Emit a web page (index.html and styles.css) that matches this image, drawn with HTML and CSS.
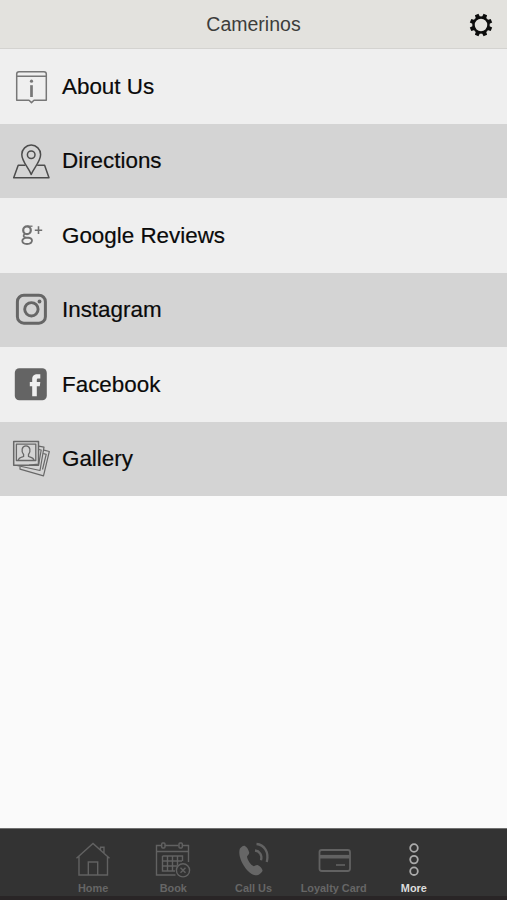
FILE: index.html
```html
<!DOCTYPE html>
<html lang="en">
<head>
    <meta charset="UTF-8">
    <meta name="viewport" content="width=device-width, initial-scale=1.0">
    <title>Camerinos</title>
    <link rel="stylesheet" href="styles.css">
</head>
<body>
    <header class="header">
        <span class="header-side"></span>
        <h1>Camerinos</h1>
        <span class="header-side">
            <svg class="settings-icon" viewBox="-12 -12 24 24">
                <circle r="7.5" fill="none" stroke="#0c0c0c" stroke-width="2.5"/>
                <g fill="#0c0c0c">
                    <path id="tooth" d="M-2.2-7.8-1.9-11.3H1.9L2.2-7.8z" transform="rotate(22.5)"/>
                    <use href="#tooth" transform="rotate(45)"/>
                    <use href="#tooth" transform="rotate(90)"/>
                    <use href="#tooth" transform="rotate(135)"/>
                    <use href="#tooth" transform="rotate(180)"/>
                    <use href="#tooth" transform="rotate(225)"/>
                    <use href="#tooth" transform="rotate(270)"/>
                    <use href="#tooth" transform="rotate(315)"/>
                </g>
            </svg>
        </span>
    </header>

    <main class="menu">
        <a class="menu-item">
            <svg class="menu-icon" viewBox="0 -3 60 60" stroke="#777">
                <path d="M19 11.7H44Q46.3 11.7 46.3 14V40.3H34L31.5 42.6 29 40.3H16.7V14Q16.7 11.7 19 11.7zM17 16.2H46"/>
                <path d="M31.5 25.2V37" stroke-width="2.7"/>
                <circle cx="31.5" cy="21.2" r="1.6" fill="#777" stroke="none"/>
            </svg>
            <span>About Us</span>
        </a>
        <a class="menu-item">
            <svg class="menu-icon" viewBox="0 -2.5 60 60" stroke="#4c4c4c">
                <path d="M31.2 41C28.5 34 21.8 28 21.8 21A9.4 9.4 0 0 1 40.6 21C40.6 28 34 34 31.2 41z"/>
                <circle cx="31.2" cy="21.2" r="3.8"/>
                <path d="M25.3 31.7H18.2L13.7 44.3H49L44.6 31.7H37.2"/>
            </svg>
            <span>Directions</span>
        </a>
        <a class="menu-item">
            <svg class="menu-icon" viewBox="0 -2 60 60" stroke="#707070">
                <ellipse cx="27" cy="22.2" rx="3.8" ry="3.9" stroke-width="2.2"/>
                <path d="M27 18.2H32.5" stroke-width="1.3"/>
                <path d="M25 26C22.5 27.5 23.5 29.2 26 29.5C30 29.7 32 30.5 32 32.3C32 34.8 29.8 36 27 36C24 36 22.3 34.7 22.3 32.8C22.3 31.3 24 30.2 26 29.6" stroke-width="1.8"/>
                <path d="M34.8 22.2H42.2M38.5 18.3V26.1" stroke-width="1.6"/>
            </svg>
            <span>Google Reviews</span>
        </a>
        <a class="menu-item">
            <svg class="menu-icon" viewBox="0 -3.5 60 60" stroke="#666">
                <rect x="17.4" y="11.7" width="28" height="28" rx="6.5" stroke-width="3"/>
                <circle cx="31.4" cy="25.8" r="6.7" stroke-width="2.9"/>
                <circle cx="39.5" cy="18" r="1.9" fill="#666" stroke="none"/>
            </svg>
            <span>Instagram</span>
        </a>
        <a class="menu-item">
            <svg class="menu-icon" viewBox="0 -3 60 60">
                <rect x="14.8" y="10.2" width="32" height="32" rx="4.5" fill="#646464"/>
                <path d="M32.2 38.3V28.3H29.8V24H32.2V21.5C32.2 17.7 34 16.2 37.4 16.2H40.3V20.5H38.2C37 20.5 36.8 21.1 36.8 22V24H40.3L39.8 28.3H36.8V38.3z" fill="#efefef"/>
            </svg>
            <span>Facebook</span>
        </a>
        <a class="menu-item">
            <svg class="menu-icon" viewBox="0 -0.5 60 60" stroke="#686868">
                <rect x="13.7" y="12" width="24.8" height="23.7"/>
                <rect x="16.4" y="14.6" width="19.4" height="16.4" stroke-width="1.3"/>
                <path d="M18.3 30.8C18.6 28 21 27.8 23.6 27V25C21 22 21.6 16.4 26 16.4S31 22 28.5 25V27C31 27.8 33.6 28 34 30.8" stroke-width="1.3"/>
                <g stroke-width="1.2">
                    <path d="M38.6 16.7L44 17.7 40 41 17 36M38.6 20L41.2 20.5 38.7 34.6 29 35.7"/>
                    <path d="M44 20.7L49.3 22 43.5 46.3 20 39.7V37M43.2 24L46.2 24.8 42.5 40"/>
                </g>
            </svg>
            <span>Gallery</span>
        </a>
    </main>

    <nav class="tab-bar">
        <a class="tab">
            <svg class="tab-icon" viewBox="0 0 44 44">
                <path d="M5.5 20.2L22 5.5 38.5 20.2M8 18V37H36.5V18M17.3 37V24H26.7V37M29.5 12V9.2H33V15.2"/>
            </svg>
            <span>Home</span>
        </a>
        <a class="tab">
            <svg class="tab-icon" viewBox="0 0 44 44">
                <path d="M10 7.5H5.5V37H24.5M14 7.5H27.5M31.5 7.5H37.5V24M5.5 13.5H37.5"/>
                <rect x="10.7" y="5" width="3.3" height="5" rx="1"/>
                <rect x="28" y="5" width="3.3" height="5" rx="1"/>
                <path d="M11.5 18H31.5V23M11.5 18V33H24M11.5 23H31M11.5 28H27M16.5 18V33M21.5 18V33M26.5 18V27"/>
                <circle cx="32" cy="32.3" r="6.6"/>
                <path d="M29.5 29.8L34.5 34.8M34.5 29.8L29.5 34.8"/>
            </svg>
            <span>Book</span>
        </a>
        <a class="tab">
            <svg class="tab-icon" viewBox="0 0 44 44">
                <path d="M7.8 10.8C9 9 11 7.3 12.6 7.7C15.2 9 16.4 11.5 17.2 14.5C17.3 16.3 15.5 17.2 15 18.5C15.5 22.3 18.5 26.8 21.8 28.3C23 27.9 24 26.7 26 27.2C28.4 28.4 30.1 30.5 30.6 32.5C29.8 35 26.5 37.6 23.5 37.3C15.5 36.7 4.8 20 7.8 10.8z" fill="#666" stroke="none"/>
                <path d="M24.5 6C32 6.5 37.3 14 34.8 24M23 12.5C27.5 13 30.5 17 29 22.2" stroke-width="2.3"/>
            </svg>
            <span>Call Us</span>
        </a>
        <a class="tab">
            <svg class="tab-icon" viewBox="0 0 44 44">
                <rect x="7.5" y="12" width="30.5" height="21" rx="2.2" stroke-width="1.8"/>
                <path d="M8 18.7H37.7" stroke-width="3.6"/>
                <path d="M24 27H33" stroke-width="1.6"/>
            </svg>
            <span>Loyalty Card</span>
        </a>
        <a class="tab active">
            <svg class="tab-icon" viewBox="0 0 44 44">
                <circle cx="22" cy="10" r="3.8" stroke-width="1.8"/>
                <circle cx="22" cy="21.6" r="3.8" stroke-width="1.8"/>
                <circle cx="22" cy="33.2" r="3.8" stroke-width="1.8"/>
            </svg>
            <span>More</span>
        </a>
    </nav>
</body>
</html>
```
FILE: styles.css
```css
* {
    box-sizing: border-box;
}
body {
    display: flex;
    flex-direction: column;
    height: 100vh;
    margin: 0;
    overflow: hidden;
    background: #fafafa;
    font-family: "Liberation Sans", Arial, sans-serif;
}
.header {
    display: flex;
    align-items: center;
    justify-content: space-between;
    height: 49.4px;
    background: #e3e2de;
    border-bottom: 1px solid #d4d3d0;
}
.header h1 {
    margin: 0;
    color: #3d3d3b;
    font-size: 19.5px;
    font-weight: normal;
}
.header-side {
    display: flex;
    width: 60px;
    padding: 2px 14px 0 0;
    justify-content: flex-end;
}
.settings-icon {
    width: 24px;
    height: 24px;
}
.menu {
    flex: 1;
}
.menu-item {
    display: flex;
    align-items: center;
    height: 74.5px;
    padding-right: 16px;
    background: #efefef;
    color: #0a0a0a;
    font-size: 22.4px;
    -webkit-text-stroke: 0.2px;
}
.menu-item:nth-child(even) {
    background: #d4d4d4;
}
.menu-icon {
    width: 60px;
    height: 60px;
    margin-right: 2px;
    fill: none;
    stroke-width: 1.5;
    stroke-linejoin: round;
}
.tab-bar {
    display: flex;
    justify-content: center;
    height: 72px;
    padding-top: 9px;
    background: #333;
    border-top: 1px solid #707070;
    border-bottom: 4px solid #292526;
}
.tab {
    display: flex;
    flex-direction: column;
    align-items: center;
    width: 80.2px;
    color: #666;
    font-size: 10.9px;
    font-weight: bold;
    line-height: 13px;
    white-space: nowrap;
}
.tab-icon {
    width: 44px;
    height: 44px;
    fill: none;
    stroke: #626262;
    stroke-width: 1.4;
}
.tab.active {
    color: #ddd;
}
.tab.active .tab-icon {
    stroke: #aaa;
}
```
